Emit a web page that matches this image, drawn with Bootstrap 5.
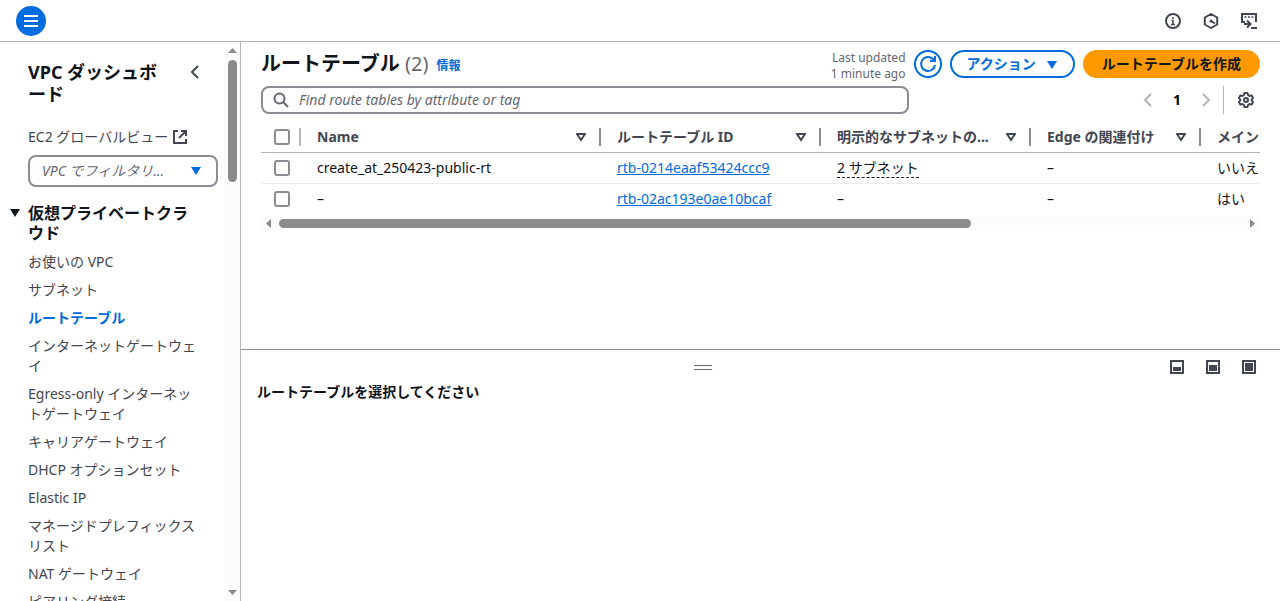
<!DOCTYPE html>
<html lang="ja">
<head>
<meta charset="utf-8">
<meta name="viewport" content="width=device-width, initial-scale=1">
<title>ルートテーブル | VPC</title>
<link href="https://cdn.jsdelivr.net/npm/bootstrap@5.3.0/dist/css/bootstrap.min.css" rel="stylesheet">
<style>
:root { --ink: #0f141a; --slate: #424650; --muted: #656871; --edge: #8c8c94; --blue: #006ce0; --thumb: #8b8b8b; }
body { font-family: "Noto Sans", "Noto Sans CJK JP", sans-serif; font-size: 14px; line-height: 20px; color: var(--ink); }
svg { display: block; flex: none; }
button { color: inherit; }
a { color: var(--blue); }
.bare { border: 0; background: none; padding: 0; }
.topbar { height: 42px; border-bottom: 1px solid #b4b4bb; padding: 0 23px 0 16px; color: var(--slate); }
.topbar .tools { gap: 22px; }
.menu-btn { width: 30px; height: 30px; border: 0; padding: 0; border-radius: 50%; background: var(--blue); color: #fff; }
.sidebar { width: 241px; border-right: 1px solid #b4b4bb; }
.side-body { padding: 19px 0 0 28px; }
.side-title { font-size: 18px; line-height: 22px; font-weight: 700; width: 140px; }
.side-body a { color: var(--slate); text-decoration: none; }
.side-body a.current { color: var(--blue); font-weight: 700; }
.side-body .global-link { margin-top: 22px; }
.vpc-filter { width: 190px; height: 32px; border: 2px solid var(--edge); border-radius: 8px; font-size: 14px; line-height: 20px; font-style: italic; color: var(--muted); padding: 4px 36px 4px 12px;
  background-image: url("data:image/svg+xml,%3Csvg xmlns='http://www.w3.org/2000/svg' viewBox='0 0 10 8'%3E%3Cpath fill='%23006ce0' d='M0 0h10L5 8z'/%3E%3C/svg%3E"); background-position: right 15px center; background-size: 10px 8px; }
.side-group { font-size: 16px; line-height: 20px; font-weight: 700; margin-left: -18px; }
.side-list { margin: 9px 0 0; }
.vbar { width: 16px; background: #fcfcfc; padding: 6px 0; }
.vbar i { width: 9px; height: 122px; border-radius: 5px; background: var(--thumb); margin-top: 7px; }
.hbar { background: #fcfcfc; height: 13px; padding: 0 5px; margin-top: 3px; }
.hbar i { height: 9px; border-radius: 5px; background: var(--thumb); width: 692px; margin-left: 8px; }
.workspace { display: grid; grid-template-rows: 11fr 9fr; }
.listing { padding: 4px 20px 0; }
.page-title { font-size: 20px; line-height: 24px; font-weight: 700; }
.page-title span { font-weight: 400; color: var(--muted); }
.info-link { font-size: 12px; font-weight: 700; text-decoration: none; }
.updated { font-size: 12px; line-height: 16px; color: var(--muted); padding-top: 4px; }
.pill { height: 28px; border-radius: 14px; border: 2px solid var(--blue); font-size: 14px; line-height: 20px; font-weight: 700; color: var(--blue); padding: 0 15px; gap: 10px; background: #fff; }
.pill-round { width: 28px; padding: 0; }
.pill-main { background: #ff9900; border-color: #ff9900; color: var(--ink); padding: 0 17px; }
.search-row { margin-top: 4px; }
.search-box { max-width: 648px; height: 28px; border: 2px solid var(--edge); border-radius: 8px; padding: 0 10px; gap: 10px; color: var(--muted); }
.search-box input { border: 0; outline: 0; min-width: 0; font-size: 14px; line-height: 20px; padding: 0; }
.search-box input::placeholder { font-style: italic; color: var(--muted); opacity: 1; }
.pager { color: #b4b4bb; }
.pager .gear { border-left: 1px solid #b4b4bb; height: 28px; padding: 0 6px 0 14px; margin-left: 12px; color: var(--slate); }
.grid-wrap { margin-top: 7px; }
.routes { table-layout: fixed; width: 1396px; }
.routes th, .routes td { padding: 0 0 0 16px; height: 31px; vertical-align: middle; white-space: nowrap; }
.routes th { color: var(--slate); border-bottom: 1px solid #b4b4bb; padding-top: 2px; }
.routes tbody tr + tr > * { border-top: 1px solid #ebebf0; }
.routes .pick { padding-left: 13px; }
.routes input { appearance: none; display: block; width: 16px; height: 16px; border: 2px solid var(--edge); border-radius: 3px; margin: 0; background: #fff; }
.routes input:checked { background: var(--blue); border-color: var(--blue); }
.sort { margin: 0 13px 0 auto; }
.grip { width: 2px; height: 18px; background: var(--edge); flex: none; }
.grip.faint { background: #b4b4bb; }
.dashed { border-bottom: 1px dashed var(--ink); line-height: 18px; display: inline-block; }
.detail { border-top: 1px solid var(--edge); padding: 10px 24px 0 16px; }
.drag { width: 18px; height: 5px; border: solid var(--muted); border-width: 1px 0; }
.detail h2 { font-size: 14px; line-height: 20px; font-weight: 700; margin-top: 8px; }
.layouts { gap: 22px; width: 108px; color: var(--slate); }
</style>
</head>
<body class="vh-100 d-flex flex-column overflow-hidden bg-white">
<header class="topbar d-flex align-items-center flex-shrink-0">
  <button class="menu-btn d-flex align-items-center justify-content-center" aria-label="メニュー">
    <svg width="14" height="12" fill="none" stroke="#fff" stroke-width="2"><path d="M0 1h14M0 6h14M0 11h14"/></svg>
  </button>
  <div class="tools ms-auto d-flex align-items-center">
    <button class="bare" aria-label="情報"><svg width="16" height="16" fill="none" stroke="currentColor" stroke-width="2"><circle cx="8" cy="8" r="7"/><path d="M8 4v2M6.500 7.500H8v4M6 11.500h4" stroke-width="1.500"/></svg></button>
    <button class="bare" aria-label="Amazon Q"><svg width="16" height="16" fill="none" stroke="currentColor" stroke-width="2" stroke-linejoin="round"><path d="M8 1l6.200 3.500v7L8 15l-6.200-3.500v-7z"/><path d="M8 8l4 2.500"/><circle cx="8" cy="8" r="1.500" fill="currentColor" stroke="none"/></svg></button>
    <button class="bare" aria-label="CloudShell"><svg width="16" height="16" fill="none" stroke="currentColor" stroke-width="2"><path d="M4 9H1V1h14v8M10 15h6M3 11h6M6 7.500L9.500 11 6 14.500"/><path d="M3.500 4h2M7 4h2M10.500 4h2" stroke-width="1.500"/></svg></button>
  </div>
</header>
<div class="d-flex flex-fill overflow-hidden">
  <aside class="sidebar d-flex flex-shrink-0">
    <nav class="side-body flex-fill overflow-hidden" aria-label="VPC">
      <div class="d-flex justify-content-between pe-4">
        <div class="side-title">VPC ダッシュボード</div>
        <button class="bare align-self-start mt-1" aria-label="閉じる"><svg width="10" height="14" fill="none" stroke="#424650" stroke-width="2"><path d="M8 1L2 7l6 6"/></svg></button>
      </div>
      <a href="#" class="global-link d-flex align-items-center gap-1">EC2 グローバルビュー
        <svg width="16" height="16" fill="none" stroke="currentColor" stroke-width="2"><path d="M6 2H2v12h12v-4M9 2h5v5M14 2L7 9"/></svg></a>
      <select class="vpc-filter form-select mt-2" aria-label="VPC でフィルタリング"><option>VPC でフィルタリ...</option></select>
      <div class="side-group d-flex mt-3 pe-4"><svg class="me-2 mt-1" width="10" height="12"><path d="M0 2h10L5 10z" fill="#0f141a"/></svg><span>仮想プライベートクラウド</span></div>
      <ul class="side-list list-unstyled d-flex flex-column gap-2 pe-4">
        <li><a href="#">お使いの VPC</a></li>
        <li><a href="#">サブネット</a></li>
        <li><a href="#" class="current" aria-current="page">ルートテーブル</a></li>
        <li><a href="#">インターネットゲートウェイ</a></li>
        <li><a href="#">Egress-only インターネットゲートウェイ</a></li>
        <li><a href="#">キャリアゲートウェイ</a></li>
        <li><a href="#">DHCP オプションセット</a></li>
        <li><a href="#">Elastic IP</a></li>
        <li><a href="#">マネージドプレフィックスリスト</a></li>
        <li><a href="#">NAT ゲートウェイ</a></li>
        <li><a href="#">ピアリング接続</a></li>
      </ul>
    </nav>
    <div class="vbar d-flex flex-column align-items-center flex-shrink-0">
      <svg width="9" height="5"><path d="M0 5h9L4.500 0z" fill="#8b8b8b"/></svg><i></i>
      <svg class="mt-auto" width="9" height="5"><path d="M0 0h9L4.500 5z" fill="#8b8b8b"/></svg>
    </div>
  </aside>
  <main class="workspace flex-fill overflow-hidden">
    <section class="listing overflow-hidden">
      <div class="d-flex align-items-center gap-2">
        <h1 class="page-title mb-0">ルートテーブル <span>(2)</span></h1>
        <a href="#" class="info-link mt-1">情報</a>
        <div class="updated ms-auto text-end">Last updated<br>1 minute ago</div>
        <button class="pill pill-round d-flex align-items-center justify-content-center" aria-label="更新"><svg width="18" height="18" fill="none" stroke="currentColor" stroke-width="2"><path d="M16 10a7 7 0 1 1-2-6l2 2M16 1v5h-5"/></svg></button>
        <button class="pill d-flex align-items-center">アクション<svg width="12" height="9"><path d="M1 1h10L6 9z" fill="currentColor"/></svg></button>
        <button class="pill pill-main">ルートテーブルを作成</button>
      </div>
      <div class="search-row d-flex align-items-center justify-content-between">
        <label class="search-box flex-fill d-flex align-items-center">
          <svg width="16" height="16" fill="none" stroke="currentColor" stroke-width="2"><circle cx="6.500" cy="6.500" r="5"/><path d="M10 10l5 5"/></svg>
          <input class="flex-fill" type="search" placeholder="Find route tables by attribute or tag" aria-label="ルートテーブルを検索">
        </label>
        <div class="pager d-flex align-items-center">
          <button class="bare" aria-label="前へ"><svg width="10" height="14" fill="none" stroke="currentColor" stroke-width="2"><path d="M8 1L2 7l6 6"/></svg></button>
          <b class="px-3 mx-1 text-black">1</b>
          <button class="bare" aria-label="次へ"><svg width="10" height="14" fill="none" stroke="currentColor" stroke-width="2"><path d="M2 1l6 6-6 6"/></svg></button>
          <div class="gear d-flex align-items-center"><button class="bare" aria-label="設定"><svg width="16" height="16" fill="none" stroke="currentColor" stroke-width="2" stroke-linejoin="round"><path d="M6.500 1h3l.6 2.200 1.400.8 2.200-.6 1.300 2.500L13.500 8l1.500 2.100-1.300 2.500-2.200-.6-1.400.8L9.500 15h-3l-.6-2.200-1.400-.8-2.200.6L1 10.100 2.500 8 1 5.900l1.300-2.500 2.200.6 1.400-.8z"/><circle cx="8" cy="8" r="2"/></svg></button></div>
        </div>
      </div>
      <div class="grid-wrap overflow-hidden">
        <table class="routes">
          <colgroup><col style="width:40px"><col style="width:300px"><col style="width:220px"><col style="width:210px"><col style="width:170px"><col></colgroup>
          <thead><tr>
            <th class="pick"><div class="d-flex justify-content-between align-items-center"><input type="checkbox" aria-label="すべて選択"><span class="grip faint"></span></div></th>
            <th scope="col"><div class="d-flex align-items-center">Name<svg class="sort" width="10" height="9"><path d="M1 1h8L5 7z" fill="none" stroke="currentColor" stroke-width="2"/></svg><span class="grip"></span></div></th>
            <th scope="col"><div class="d-flex align-items-center">ルートテーブル ID<svg class="sort" width="10" height="9"><path d="M1 1h8L5 7z" fill="none" stroke="currentColor" stroke-width="2"/></svg><span class="grip"></span></div></th>
            <th scope="col"><div class="d-flex align-items-center">明示的なサブネットの...<svg class="sort" width="10" height="9"><path d="M1 1h8L5 7z" fill="none" stroke="currentColor" stroke-width="2"/></svg><span class="grip"></span></div></th>
            <th scope="col"><div class="d-flex align-items-center">Edge の関連付け<svg class="sort" width="10" height="9"><path d="M1 1h8L5 7z" fill="none" stroke="currentColor" stroke-width="2"/></svg><span class="grip"></span></div></th>
            <th scope="col">メイン</th>
          </tr></thead>
          <tbody>
            <tr><td class="pick"><input type="checkbox" aria-label="create_at_250423-public-rt を選択"></td><td>create_at_250423-public-rt</td><td><a href="#">rtb-0214eaaf53424ccc9</a></td><td><span class="dashed">2 サブネット</span></td><td>–</td><td>いいえ</td></tr>
            <tr><td class="pick"><input type="checkbox" aria-label="rtb-02ac193e0ae10bcaf を選択"></td><td>–</td><td><a href="#">rtb-02ac193e0ae10bcaf</a></td><td>–</td><td>–</td><td>はい</td></tr>
          </tbody>
        </table>
      </div>
      <div class="hbar d-flex align-items-center">
        <svg width="5" height="9"><path d="M5 0v9L0 4.500z" fill="#8b8b8b"/></svg><i></i>
        <svg class="ms-auto" width="5" height="9"><path d="M0 0v9l5-4.500z" fill="#8b8b8b"/></svg>
      </div>
    </section>
    <section class="detail">
      <div class="d-flex align-items-center">
        <div class="flex-fill d-flex justify-content-center"><div class="drag"></div></div>
        <div class="layouts d-flex justify-content-end">
          <button class="bare" aria-label="小"><svg width="14" height="14"><path d="M1 1h12v12H1z" fill="none" stroke="currentColor" stroke-width="2"/><path d="M3 7h8v4H3z" fill="currentColor"/></svg></button>
          <button class="bare" aria-label="中"><svg width="14" height="14"><path d="M1 1h12v12H1z" fill="none" stroke="currentColor" stroke-width="2"/><path d="M3 5h8v6H3z" fill="currentColor"/></svg></button>
          <button class="bare" aria-label="大"><svg width="14" height="14"><path d="M1 1h12v12H1z" fill="none" stroke="currentColor" stroke-width="2"/><path d="M3 3h8v8H3z" fill="currentColor"/></svg></button>
        </div>
      </div>
      <h2>ルートテーブルを選択してください</h2>
    </section>
  </main>
</div>
<script src="https://cdn.jsdelivr.net/npm/bootstrap@5.3.0/dist/js/bootstrap.bundle.min.js"></script>
</body>
</html>
